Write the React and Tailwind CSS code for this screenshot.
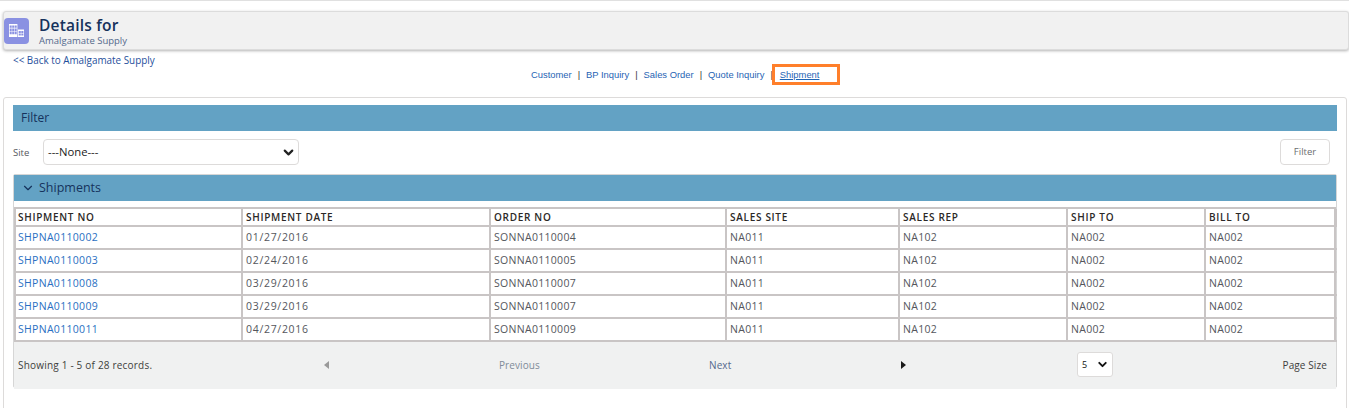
import { ChevronDown } from 'lucide-react'

const rows = [
  ['SHPNA0110002', '01/27/2016', 'SONNA0110004'],
  ['SHPNA0110003', '02/24/2016', 'SONNA0110005'],
  ['SHPNA0110008', '03/29/2016', 'SONNA0110007'],
  ['SHPNA0110009', '03/29/2016', 'SONNA0110007'],
  ['SHPNA0110011', '04/27/2016', 'SONNA0110009'],
]

const columns = ['SHIPMENT NO', 'SHIPMENT DATE', 'ORDER NO', 'SALES SITE', 'SALES REP', 'SHIP TO', 'BILL TO']
const gridCols = 'grid-cols-[227px_248px_236px_173px_168px_138px_131px]'

function Cell({ children, head, link }) {
  return (
    <div
      className={`flex items-center border-r-2 border-b-2 border-[#c9c5c5] last:border-r-0 min-w-0 first:pl-[2px]
        ${link ? 'pl-[2px]' : 'pl-[3px]'}
        ${head ? 'h-[18px] font-semibold text-[#2b2826] tracking-[0.7px] text-[10px]' : 'h-[23px] text-[10.5px] tracking-[0.3px]'}
        ${link ? 'text-[#2a6fc2]' : ''} ${!head && !link ? 'text-[#54565c]' : ''}`}
    >
      {children}
    </div>
  )
}

function PageHeader() {
  return (
    <div className="mt-[10px] ml-[3px] h-[39px] flex items-center bg-[#f1f1f1] border border-[#dcdcdc] rounded-[3px] shadow-[0_1px_3px_rgba(0,0,0,0.3)]">
      <div className="w-[25px] h-[26px] rounded-[4px] bg-[#8a91e2] flex items-center justify-center">
        <svg width="15" height="13" viewBox="0 0 15 13" fill="#fff">
          <path d="M0 0h8.4v13H0z M.7 1.4v2.4h2v-2.4z M3.2 1.4v2.4h2v-2.4z M5.7 1.4v2.4h2v-2.4z M.7 4.4v2.6h2V4.4z M3.2 4.4v2.6h2V4.4z M5.7 4.4v2.6h2V4.4z M.7 7.6v2.6h2V7.6z M3.2 7.6v2.6h2V7.6z M5.7 7.6v2.6h2V7.6z" fillRule="evenodd" />
          <path d="M9 5.5h6V13H9z M9.7 7v2h2.1V7z M12.3 7v2h2.1V7z M9.7 9.6v2h2.1v-2z M12.3 9.6v2h2.1v-2z" fillRule="evenodd" />
        </svg>
      </div>
      <div className="ml-[10px]">
        <div className="text-[15.5px] leading-[19px] font-semibold text-[#16325c] tracking-[0.2px] mt-[2px]">Details for</div>
        <div className="text-[9.5px] leading-[12px] text-[#54698d]">Amalgamate Supply</div>
      </div>
    </div>
  )
}

function NavLinks() {
  const items = ['Customer', 'BP Inquiry', 'Sales Order', 'Quote Inquiry']
  return (
    <div className="h-[21px] mt-px flex items-center pl-[531px] text-[9.4px] text-[#1f64b4] font-['Liberation_Sans',sans-serif]">
      {items.map((item) => (
        <span key={item} className="flex items-center pt-[2px]">
          <a>{item}</a>
          <span className="mx-[6px] text-[#333]">|</span>
        </span>
      ))}
      <span className="-ml-[7px] w-[68px] h-[21px] pt-px border-[3px] border-[#ff7f2a] flex items-center pl-[5px] underline">Shipment</span>
    </div>
  )
}

function Pager() {
  return (
    <div className="h-[47px] pb-[2px] bg-[#f0f1f1] grid grid-cols-[305px_180px_210px_192px_212px_1fr] items-center text-[10px] tracking-[0.1px]">
      <span className="pl-[4px] mt-px text-[#3e3e3c] tracking-[0.2px]">Showing 1 - 5 of 28 records.</span>
      <span className="pl-[5px]">
        <svg width="5" height="8" viewBox="0 0 5 8" fill="#9a9a9a"><path d="M5 0v8L0 4z" /></svg>
      </span>
      <span className="mt-px text-[#7f8b99]">Previous</span>
      <span className="mt-px text-[#54698d]">Next</span>
      <span className="flex items-center justify-between">
        <svg width="5" height="8" viewBox="0 0 5 8" fill="#1a1a1a"><path d="M0 0v8l5-4z" /></svg>
        <span className="w-[36px] h-[25px] bg-white border border-[#dddbda] rounded-[3px] flex items-center justify-between pl-[4px] pr-[3px] text-[9px] text-[#111]">
          5
          <ChevronDown size={13} strokeWidth={3.5} />
        </span>
      </span>
      <span className="mt-px text-right pr-[9px] text-[#3e3e3c]">Page Size</span>
    </div>
  )
}

export default function App() {
  return (
    <div className="w-[1349px] h-[408px] overflow-hidden bg-white border-t border-[#e0e0e0] font-['Open_Sans',sans-serif]">
      <PageHeader />
      <div className="h-[47px]">
        <div className="h-[13px] pl-[13px] pt-[3px] text-[9.9px] leading-[14px] text-[#1f4f9c]">&lt;&lt; Back to Amalgamate Supply</div>
        <NavLinks />
      </div>
      <div className="ml-[3px] mr-[2px] h-[320px] border border-[#dddbda] rounded-[3px] px-[9px] pt-[7px]">
        <div className="h-[26px] bg-[#63a2c4] flex items-center pl-[8px] text-[12px] text-[#16325c]">Filter</div>
        <div className="h-[43px] flex items-start pt-[8px] pr-[7px]">
          <span className="w-[30px] mt-[7px] text-[9.5px] text-[#54565c]">Site</span>
          <div className="w-[256px] h-[26px] border border-[#dddbda] rounded-[4px] flex items-center justify-between pl-[4px] pr-[2px] text-[11.3px] text-[#222]">
            ---None---
            <ChevronDown size={15} strokeWidth={3.5} />
          </div>
          <button className="ml-auto w-[50px] h-[26px] border border-[#dddbda] rounded-[4px] text-[9.5px] text-[#6b6d70]">Filter</button>
        </div>
        <div className="w-[1324px] h-[214px] border border-[#d6d6d6] rounded-[2px]">
          <div className="h-[26px] bg-[#63a2c4] flex items-center pl-[7px] text-[12.5px] text-[#16325c]">
            <ChevronDown size={14} strokeWidth={2} />
            <span className="ml-[4px]">Shipments</span>
          </div>
          <div className="h-[6px]" />
          <div className={`grid ${gridCols} border-t-2 border-l-2 border-r-2 border-[#c9c5c5] w-[1322px]`}>
            {columns.map((c) => (
              <Cell key={c} head>{c}</Cell>
            ))}
            {rows.map((r) => (
              <div key={r[0]} className="contents">
                <Cell link>{r[0]}</Cell>
                <Cell><span className="tracking-[0.7px]">{r[1]}</span></Cell>
                <Cell>{r[2]}</Cell>
                <Cell>NA011</Cell>
                <Cell>NA102</Cell>
                <Cell>NA002</Cell>
                <Cell>NA002</Cell>
              </div>
            ))}
          </div>
          <Pager />
        </div>
      </div>
    </div>
  )
}
